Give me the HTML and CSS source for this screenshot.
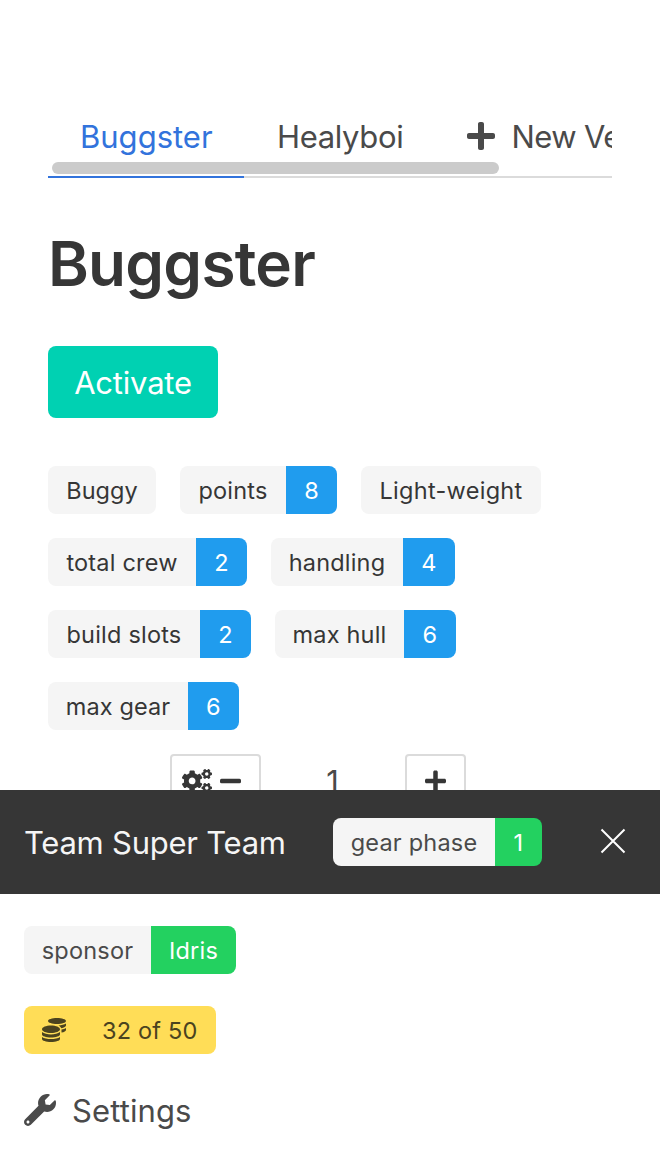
FILE: index.html
```html
<!DOCTYPE html>
<html lang="en">
<head>
<meta charset="utf-8">
<title>Buggster</title>
<link rel="stylesheet" href="styles.css">
</head>
<body>
<svg class="defs" aria-hidden="true">
  <symbol id="plus" viewBox="0 0 448 512"><path d="M416 208H272V64c0-17.67-14.33-32-32-32h-32c-17.67 0-32 14.33-32 32v144H32c-17.67 0-32 14.33-32 32v32c0 17.67 14.33 32 32 32h144v144c0 17.67 14.33 32 32 32h32c17.67 0 32-14.33 32-32V304h144c17.67 0 32-14.33 32-32v-32c0-17.67-14.33-32-32-32z"/></symbol>
  <path id="small-cog" d="M512.1 191l-8.2 14.3c-3 5.3-9.4 7.5-15.1 5.4-11.8-4.4-22.6-10.7-32.1-18.6-4.6-3.8-5.8-10.5-2.8-15.7l8.2-14.3c-6.9-8-12.3-17.3-15.9-27.4h-16.5c-6 0-11.2-4.3-12.2-10.3-2-12-2.1-24.6 0-37.1 1-6 6.2-10.4 12.2-10.4h16.5c3.6-10.1 9-19.4 15.9-27.4l-8.2-14.3c-3-5.2-1.9-11.9 2.8-15.7 9.5-7.9 20.4-14.2 32.1-18.6 5.7-2.1 12.1.1 15.1 5.4l8.2 14.3c10.5-1.9 21.2-1.9 31.7 0L552 6.3c3-5.3 9.4-7.5 15.1-5.4 11.8 4.4 22.6 10.7 32.1 18.6 4.6 3.8 5.8 10.5 2.8 15.7l-8.2 14.3c6.9 8 12.3 17.3 15.9 27.4h16.5c6 0 11.2 4.3 12.2 10.3 2 12 2.1 24.6 0 37.1-1 6-6.2 10.4-12.2 10.4h-16.5c-3.6 10.1-9 19.4-15.9 27.4l8.2 14.3c3 5.2 1.9 11.9-2.8 15.7-9.5 7.9-20.4 14.2-32.1 18.6-5.7 2.1-12.1-.1-15.1-5.4l-8.2-14.3c-10.4 1.9-21.2 1.9-31.7 0zm-10.5-58.8c38.5 29.6 82.4-14.3 52.8-52.8-38.5-29.7-82.4 14.3-52.8 52.8z"/>
</svg>

<main class="vehicle">
  <nav class="tabs">
    <a class="tab tab-active">Buggster</a>
    <a class="tab tab-second">Healyboi</a>
    <a class="tab tab-new"><svg class="tab-plus"><use href="#plus"/></svg><span>New Vehicle</span></a>
    <span class="scrollbar"></span>
  </nav>

  <h1 class="title">Buggster</h1>
  <button class="activate">Activate</button>

  <div class="tags">
    <div class="tag"><span class="label w-buggy">Buggy</span></div>
    <div class="tag"><span class="label w-points">points</span><span class="value">8</span></div>
    <div class="tag"><span class="label w-weight">Light-weight</span></div>
    <div class="tag"><span class="label w-crew">total crew</span><span class="value">2</span></div>
    <div class="tag"><span class="label w-handling">handling</span><span class="value value-wide">4</span></div>
    <div class="tag"><span class="label w-slots">build slots</span><span class="value">2</span></div>
    <div class="tag"><span class="label w-hull">max hull</span><span class="value value-wide">6</span></div>
    <div class="tag"><span class="label w-gear">max gear</span><span class="value">6</span></div>
  </div>

  <div class="stepper">
    <button class="step step-minus">
      <svg class="cogs" viewBox="0 0 640 512"><use href="#small-cog"/><use href="#small-cog" y="298.7"/><path d="M386.3 286.1l33.7 16.8c10.1 5.8 14.5 18.1 10.5 29.1-8.9 24.2-26.4 46.4-42.6 65.8-7.4 8.9-20.2 11.1-30.3 5.3l-29.1-16.8c-16 13.7-34.6 24.6-54.9 31.7v33.6c0 11.6-8.3 21.6-19.7 23.6-24.6 4.2-50.4 4.4-75.9 0-11.5-2-20-11.9-20-23.6V418c-20.3-7.2-38.9-18-54.9-31.7L74 403c-10 5.8-22.9 3.6-30.3-5.3-16.2-19.4-33.3-41.6-42.2-65.7-4-10.9.4-23.2 10.5-29.1l33.3-16.8c-3.9-20.9-3.9-42.4 0-63.4L12 205.8c-10.1-5.8-14.6-18.1-10.5-29 8.9-24.2 26-46.4 42.2-65.8 7.4-8.9 20.2-11.1 30.3-5.3l29.1 16.8c16-13.7 34.6-24.6 54.9-31.7V57.1c0-11.5 8.2-21.5 19.6-23.5 24.6-4.2 50.5-4.4 76-.1 11.5 2 20 11.9 20 23.6v33.6c20.3 7.2 38.9 18 54.9 31.7l29.1-16.8c10-5.8 22.9-3.6 30.3 5.3 16.2 19.4 33.2 41.6 42.1 65.8 4 10.9.1 23.2-10 29.1l-33.7 16.8c3.9 21 3.9 42.5 0 63.5zm-117.6 21.1c59.2-77-28.7-164.9-105.7-105.7-59.2 77 28.7 164.9 105.7 105.7z"/></svg>
      <svg class="sign" viewBox="0 0 448 512"><rect y="208" width="448" height="96" rx="32"/></svg>
    </button>
    <span class="count">1</span>
    <button class="step step-plus"><svg class="sign"><use href="#plus"/></svg></button>
  </div>
</main>

<section class="panel">
  <header class="team-bar">
    <span class="team-name">Team Super Team</span>
    <div class="tag phase"><span class="label w-phase">gear phase</span><span class="value value-green w-one">1</span></div>
    <svg class="close" viewBox="0 0 26 26"><path d="M1.5 1.5l23 23M24.5 1.5l-23 23"/></svg>
  </header>
  <div class="team-body">
    <div class="tag sponsor"><span class="label w-sponsor">sponsor</span><span class="value value-green w-idris">Idris</span></div>
    <div class="tag cans">
      <svg class="coins" viewBox="0 0 512 512"><path d="M0 405.3V448c0 35.3 86 64 192 64s192-28.7 192-64v-42.7C342.7 434.4 267.2 448 192 448S41.3 434.4 0 405.3zM320 128c106 0 192-28.7 192-64S426 0 320 0 128 28.7 128 64s86 64 192 64zM0 300.4V352c0 35.3 86 64 192 64s192-28.7 192-64v-51.6c-41.3 34-116.9 51.6-192 51.6S41.3 334.4 0 300.4zm416 11c57.3-11.1 96-31.7 96-55.4v-42.7c-23.2 16.4-57.3 27.6-96 34.5v63.6zM192 160C86 160 0 195.8 0 240s86 80 192 80 192-35.8 192-80-86-80-192-80zm219.3 56.3c60-10.8 100.7-32 100.7-56.3v-42.7c-35.5 25.1-96.5 38.6-160.7 41.8 29.5 14.3 51.2 33.5 60 57.2z"/></svg>
      <span>32 of 50</span>
    </div>
    <a class="settings">
      <svg class="wrench" viewBox="0 0 512 512"><path d="M507.73 109.1c-2.24-9.03-13.54-12.09-20.12-5.51l-74.36 74.36-67.88-11.31-11.31-67.88 74.36-74.36c6.62-6.62 3.43-17.9-5.66-20.16-47.38-11.74-99.55.91-136.58 37.93-39.64 39.64-50.55 97.1-34.05 147.2L18.74 402.76c-24.99 24.99-24.99 65.51 0 90.5 24.99 24.99 65.51 24.99 90.5 0l213.21-213.21c50.12 16.71 107.47 5.68 147.37-34.22 37.07-37.07 49.7-89.32 37.91-136.73zM64 472c-13.25 0-24-10.75-24-24 0-13.26 10.75-24 24-24s24 10.74 24 24c0 13.25-10.75 24-24 24z"/></svg>
      <span>Settings</span>
    </a>
  </div>
</section>
</body>
</html>
```
FILE: styles.css
```css
* { box-sizing: border-box; }
body {
  margin: 0;
  height: 1166px;
  overflow: hidden;
  background: #fff;
  color: #4a4a4a;
  font: 400 31px/48px Inter, "Liberation Sans", sans-serif;
}
button { font: inherit; margin: 0; padding: 0; }
svg { fill: currentColor; flex: none; }
.defs { position: absolute; width: 0; height: 0; }

.vehicle { height: 790px; padding: 96px 48px 0; overflow: hidden; }
.tabs {
  position: relative;
  display: flex;
  height: 82px;
  overflow: hidden;
  white-space: nowrap;
  box-shadow: inset 0 -2px #dbdbdb;
}
.tab { display: flex; flex: none; height: 82px; padding: 17px 0 0 32px; }
.tab-active { width: 196px; color: #3273dc; border-bottom: 2px solid #3273dc; }
.tab-second { width: 191px; padding-left: 33px; letter-spacing: -0.35px; }
.tab-new { letter-spacing: -0.6px; }
.tab-plus { width: 28px; height: 32px; margin: 7px 16.5px 0 0; }
.scrollbar {
  position: absolute;
  left: 4px;
  top: 66px;
  width: 447px;
  height: 12px;
  border-radius: 6px;
  background: #cbcbcb;
}
.title {
  margin: 50px 0 0;
  height: 72px;
  font-size: 62px;
  line-height: 72px;
  font-weight: 600;
  letter-spacing: -0.75px;
  color: #363636;
}
.activate {
  display: block;
  width: 170px;
  height: 72px;
  margin-top: 46px;
  padding-top: 2px;
  border: 0;
  border-radius: 8px;
  background: #00d1b2;
  color: #fff;
  letter-spacing: -0.2px;
}

.tags { display: flex; flex-wrap: wrap; gap: 24px; width: 540px; margin-top: 48px; color: #363636; }
.tag {
  display: flex;
  height: 48px;
  border-radius: 8px;
  overflow: hidden;
  font-size: 23.5px;
  line-height: 49px;
  letter-spacing: 0.2px;
  text-align: center;
  white-space: nowrap;
}
.label { background: #f5f5f5; }
.value { width: 51px; background: #209cee; color: #fff; }
.value-wide { width: 52px; }
.value-green { background: #23d160; }
.w-buggy { width: 108px; letter-spacing: 0; }
.w-points { width: 106px; }
.w-weight { width: 180px; letter-spacing: 0.3px; }
.w-crew { width: 148px; }
.w-handling { width: 132px; }
.w-slots { width: 152px; }
.w-hull { width: 129px; }
.w-gear { width: 140px; letter-spacing: 0.1px; }
.w-phase { width: 162px; }
.w-one { width: 47px; }
.w-sponsor { width: 127px; }
.w-idris { width: 85px; }

.stepper { display: flex; margin: 24px 0 0 122px; }
.step {
  display: flex;
  height: 60px;
  padding: 13px 0 0 10px;
  border: 2px solid #dbdbdb;
  border-radius: 4px;
  background: #fff;
  color: #363636;
}
.step-minus { width: 91px; }
.step-plus { width: 61px; padding-left: 18px; }
.cogs { width: 30px; height: 24px; margin-right: 8px; }
.sign { width: 21px; height: 24px; }
.count { width: 144px; padding: 4px 1px 0 0; text-align: center; }

.panel { position: relative; background: #fff; }
.team-bar { display: flex; height: 104px; background: #363636; color: #f5f5f5; }
.team-name { width: 333px; padding: 29px 0 0 24px; letter-spacing: -0.25px; }
.phase { width: 209px; margin-top: 28px; color: #4a4a4a; }
.close { width: 26px; height: 26px; margin: 38px 0 0 58px; stroke: #fff; stroke-width: 2; }
.team-body { padding: 32px 24px 0; }
.sponsor { width: 212px; }
.cans { width: 192px; margin-top: 32px; padding-left: 18px; background: #ffdd57; color: #4b431f; }
.coins { width: 24px; height: 24px; margin: 12px 36px 0 0; }
.settings { display: flex; margin-top: 33px; letter-spacing: 0.1px; }
.wrench { width: 32px; height: 32px; margin: 7px 16px 0 0; }
```
